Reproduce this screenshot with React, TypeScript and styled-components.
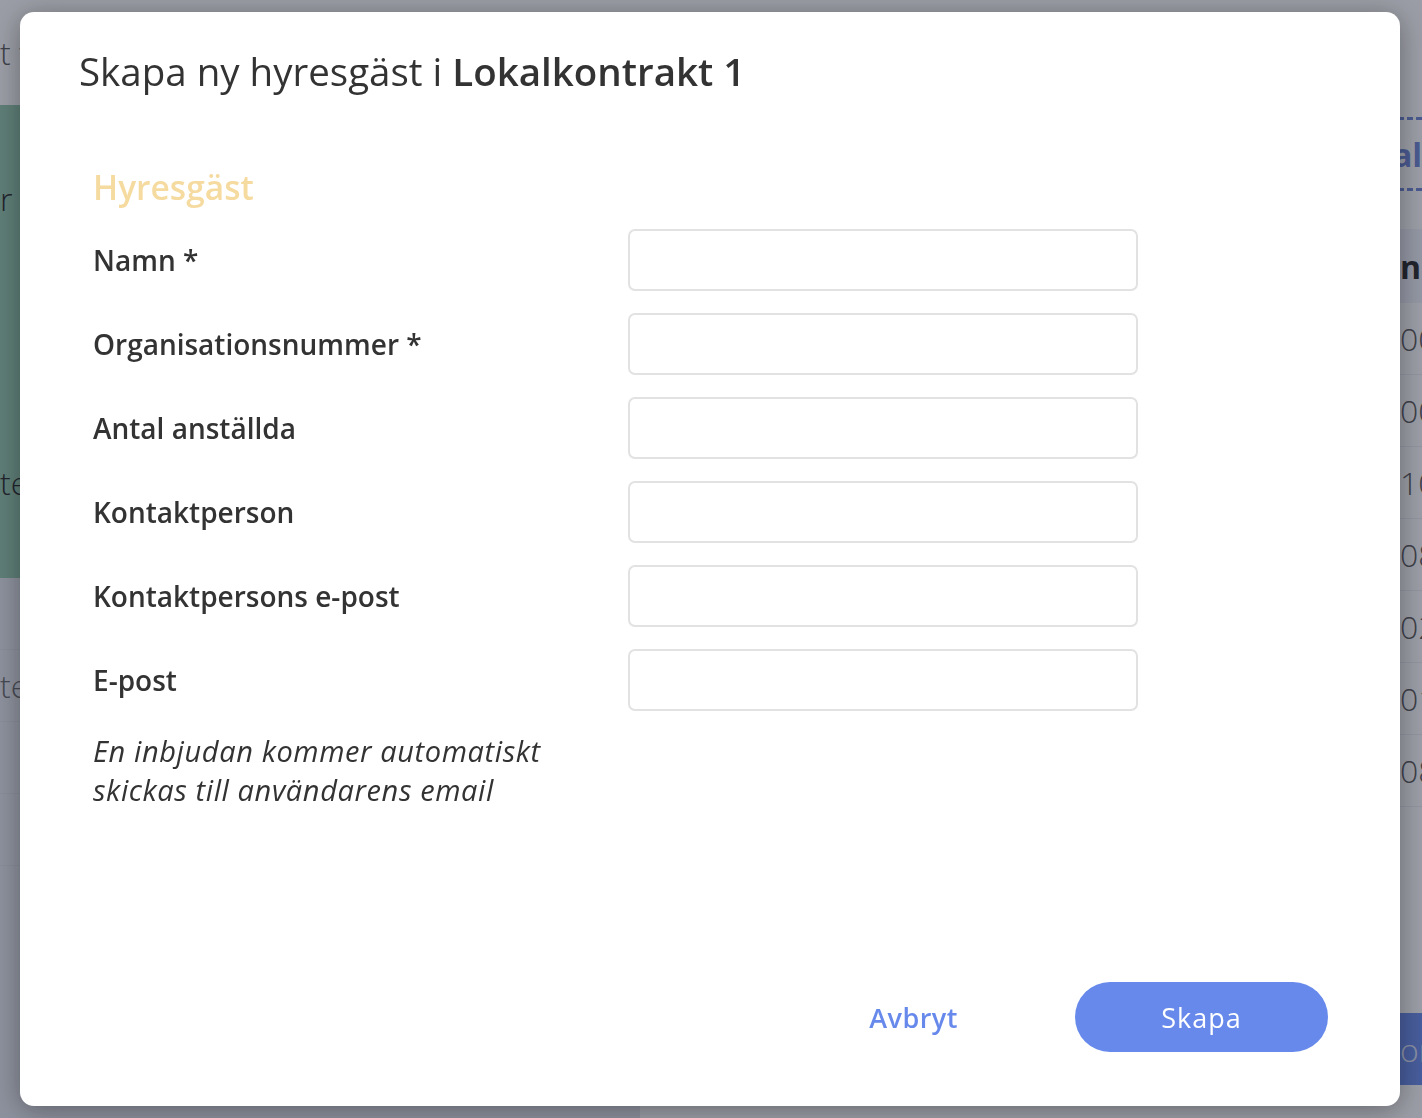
import React from 'react';
import styled, { createGlobalStyle } from 'styled-components';

const GlobalStyle = createGlobalStyle`
  html, body {
    margin: 0;
    padding: 0;
    background: #e5e9ee;
    font-family: "Open Sans", "Noto Sans", sans-serif;
    color: #333;
    overflow: hidden;
  }
  * { box-sizing: border-box; }
`;

/* ---------- page behind the dialog ---------- */

const Page = styled.div`
  width: 1422px;
  height: 1118px;
  display: flex;
  flex-direction: column;
  background: #e5e9ee;
`;

const TopBar = styled.div`
  height: 105px;
  background: #fff;
  display: flex;
  align-items: center;
  font-size: 32px;
  font-weight: 300;
  color: #555;
  white-space: nowrap;
  overflow: hidden;
`;

const Body = styled.div`
  flex: 1;
  display: grid;
  grid-template-columns: 640px 1fr;
`;

const LeftCol = styled.div`
  display: flex;
  flex-direction: column;
`;

const GreenCard = styled.div`
  height: 473px;
  background: #90c6a9;
  color: #222;
  font-size: 32px;
  font-weight: 300;
  display: flex;
  flex-direction: column;
  justify-content: space-between;
  padding: 72px 0 74px 0;
`;

const BgLine = styled.div`
  height: 72px;
  border-bottom: 1px solid #dde1e7;
  display: flex;
  align-items: center;
  font-size: 32px;
  font-weight: 300;
  color: #666;
`;

const RightCol = styled.div`
  display: flex;
  flex-direction: column;
  align-items: flex-end;
  background: #fff;
`;

const Tabs = styled.div`
  width: 100%;
  height: 124px;
  display: flex;
  justify-content: flex-end;
  align-items: flex-start;
  padding-top: 12px;
`;

const TabLink = styled.div`
  border-top: 3px dashed #6a84d6;
  border-bottom: 3px dashed #6a84d6;
  height: 74px;
  color: #6a84d6;
  font-weight: 700;
  font-size: 32px;
  width: 60px;
  display: flex;
  align-items: center;
  justify-content: flex-end;
  white-space: nowrap;
  overflow: hidden;
`;

const Table = styled.div`
  width: 100%;
  display: flex;
  flex-direction: column;
`;

const HeadRow = styled.div`
  height: 74px;
  background: #f0f3fa;
  display: flex;
  justify-content: flex-end;
  align-items: center;
  font-weight: 700;
  font-size: 32px;
  color: #222;
`;

const Cell = styled.div`
  height: 72px;
  display: flex;
  justify-content: flex-end;
  align-items: center;
  font-size: 32px;
  font-weight: 300;
  color: #555;
  border-bottom: 1px solid #eceff3;
  overflow: hidden;
  white-space: nowrap;
`;

const Tail = styled.span`
  display: inline-block;
  width: 22px;
  overflow: hidden;
  white-space: nowrap;
`;

const BgButton = styled.div`
  margin-top: 206px;
  height: 72px;
  width: 120px;
  background: #6689eb;
  color: #dfe6fb;
  font-size: 32px;
  font-weight: 300;
  display: flex;
  align-items: center;
  justify-content: flex-end;
`;

/* ---------- dialog ---------- */

const Overlay = styled.div`
  position: fixed;
  inset: 0;
  background: rgba(35, 40, 60, 0.45);
  display: flex;
  align-items: flex-start;
  justify-content: flex-start;
  padding: 12px 0 0 20px;
`;

const Dialog = styled.div`
  width: 1380px;
  height: 1094px;
  background: #fff;
  border-radius: 14px;
  box-shadow: 0 4px 28px rgba(0, 0, 0, 0.35);
  display: flex;
  flex-direction: column;
  padding: 37px 72px 54px 59px;
`;

const Title = styled.h1`
  margin: 0;
  font-size: 38.5px;
  font-weight: 400;
  line-height: 44px;
  color: #333;

  b {
    font-weight: 600;
  }
`;

const Content = styled.div`
  flex: 1;
  padding: 74px 0 0 14px;
  display: flex;
  flex-direction: column;
`;

const SectionTitle = styled.h2`
  margin: 0 0 22px;
  font-size: 33.5px;
  line-height: 40px;
  font-weight: 600;
  color: #f6dba0;
`;

const Fields = styled.div`
  display: flex;
  flex-direction: column;
  gap: 22px;
`;

const Row = styled.div`
  display: grid;
  grid-template-columns: 535px 510px;
  align-items: center;
`;

const Label = styled.label`
  font-size: 28px;
  font-weight: 600;
  color: #333;
`;

const Input = styled.input`
  height: 62px;
  width: 510px;
  border: 2px solid #e2e2e2;
  border-radius: 7px;
  background: #fff;
  font-size: 26px;
  padding: 0 16px;
  outline: none;
  font-family: inherit;
`;

const Note = styled.p`
  margin: 20px 0 0;
  font-size: 29px;
  line-height: 39px;
  letter-spacing: 0.6px;
  font-style: italic;
  color: #333;
  width: 500px;
`;

const Footer = styled.div`
  display: flex;
  justify-content: flex-end;
  align-items: center;
  gap: 105px;
`;

const TextButton = styled.button`
  background: none;
  border: none;
  padding: 0 12px;
  font-family: inherit;
  font-size: 27px;
  font-weight: 600;
  letter-spacing: 0.5px;
  color: #6689eb;
  cursor: pointer;
`;

const PrimaryButton = styled.button`
  width: 253px;
  height: 70px;
  border: none;
  border-radius: 35px;
  background: #6689eb;
  color: #fff;
  font-family: inherit;
  font-size: 27px;
  font-weight: 400;
  letter-spacing: 1px;
  cursor: pointer;
`;

const fields = [
  'Namn *',
  'Organisationsnummer *',
  'Antal anställda',
  'Kontaktperson',
  'Kontaktpersons e-post',
  'E-post',
];

const tableCells = ['00', '00', '10', '08', '02', '01', '08'];

export default function App() {
  return (
    <>
      <GlobalStyle />
      <Page>
        <TopBar>
          <Tail>t f</Tail>
        </TopBar>
        <Body>
          <LeftCol>
            <GreenCard>
              <span>r</span>
              <span>te</span>
            </GreenCard>
            <BgLine />
            <BgLine>te</BgLine>
            <BgLine />
            <BgLine />
          </LeftCol>
          <RightCol>
            <Tabs>
              <TabLink>al</TabLink>
            </Tabs>
            <Table>
              <HeadRow>
                <Tail>n</Tail>
              </HeadRow>
              {tableCells.map((c, i) => (
                <Cell key={i}>
                  <Tail>{c}</Tail>
                </Cell>
              ))}
            </Table>
            <BgButton>
              <Tail>or</Tail>
            </BgButton>
          </RightCol>
        </Body>
      </Page>

      <Overlay>
        <Dialog>
          <Title>
            Skapa ny hyresgäst i <b>Lokalkontrakt 1</b>
          </Title>
          <Content>
            <SectionTitle>Hyresgäst</SectionTitle>
            <Fields>
              {fields.map((f) => (
                <Row key={f}>
                  <Label>{f}</Label>
                  <Input type="text" />
                </Row>
              ))}
            </Fields>
            <Note>En inbjudan kommer automatiskt skickas till användarens email</Note>
          </Content>
          <Footer>
            <TextButton>Avbryt</TextButton>
            <PrimaryButton>Skapa</PrimaryButton>
          </Footer>
        </Dialog>
      </Overlay>
    </>
  );
}
